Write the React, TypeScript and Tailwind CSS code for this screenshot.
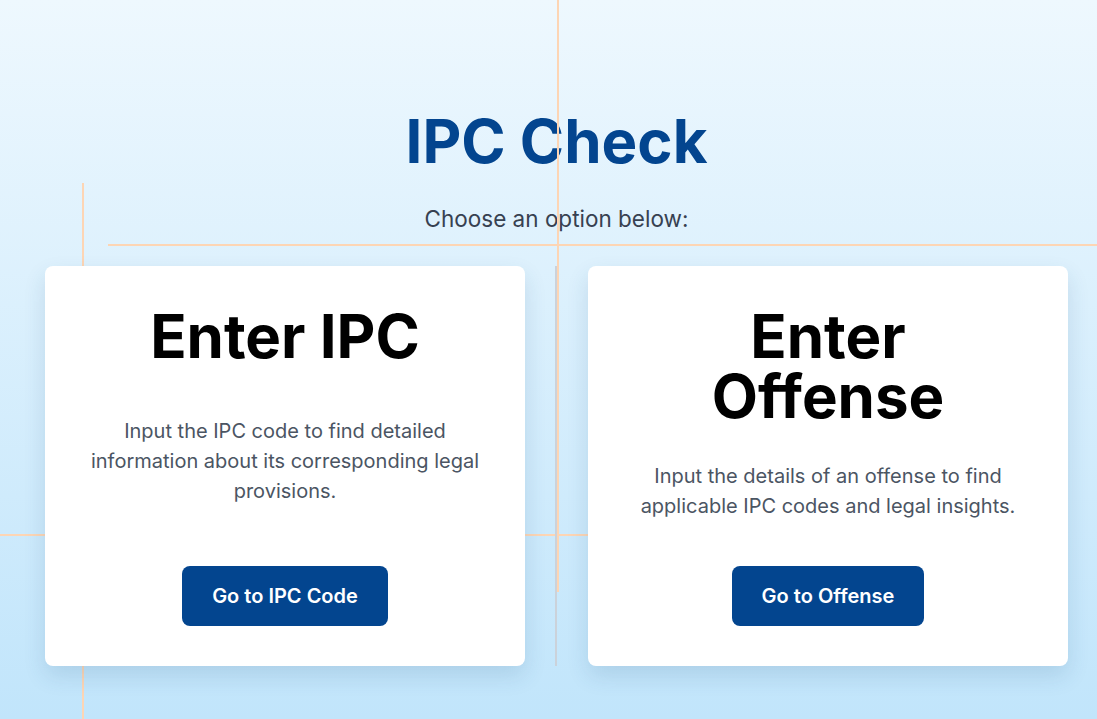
const font = { fontFamily: 'Inter, "Noto Sans", sans-serif' };

type Option = {
  title: string;
  text: string;
  action: string;
};

const options: Option[] = [
  {
    title: 'Enter IPC',
    text: 'Input the IPC code to find detailed information about its corresponding legal provisions.',
    action: 'Go to IPC Code',
  },
  {
    title: 'Enter Offense',
    text: 'Input the details of an offense to find applicable IPC codes and legal insights.',
    action: 'Go to Offense',
  },
];

function OptionCard({ opt }: { opt: Option }) {
  return (
    <div className="relative z-10 w-[480px] h-[400px] bg-white rounded-lg shadow-[0_10px_22px_rgba(30,80,120,0.14)] flex flex-col items-center px-10 py-10 text-center">
      <h2 className="text-[60px] leading-[60px] font-bold text-black px-16">{opt.title}</h2>
      <div className="flex-1 flex items-center pb-[10px]">
        <p className="text-[20px] leading-[30px] text-[#4b5563]">{opt.text}</p>
      </div>
      <button
        type="button"
        className="bg-[#03458f] text-white text-[20px] leading-[28px] font-semibold px-[30px] py-4 rounded-lg"
      >
        {opt.action}
      </button>
    </div>
  );
}

export default function App() {
  return (
    <div
      style={font}
      className="relative min-h-screen overflow-hidden bg-linear-to-b from-[#eef8fe] to-[#c1e5fb]"
    >
      <div className="pt-[111px] pl-[16px] flex flex-col items-center">
        <h1 className="text-[60px] leading-[60px] font-bold text-[#03458f]">IPC Check</h1>
        <p className="mt-[33px] text-[22.5px] leading-[30px] text-[#374151]">Choose an option below:</p>
      </div>

      {/* decorative guide lines */}
      <div className="absolute left-[557px] top-0 w-[2px] h-[592px] bg-[#fdd5b4]" />
      <div className="absolute left-[108px] right-0 top-[244px] h-[2px] bg-[#fdd5b4]" />
      <div className="absolute left-[82px] top-[183px] bottom-0 w-[2px] bg-[#fdd5b4]" />
      <div className="absolute left-0 w-[700px] top-[534px] h-[2px] bg-[#fdd5b4]" />

      <div className="mt-[32px] pl-[45px] flex items-stretch">
        <OptionCard opt={options[0]} />
        <div className="relative z-10 ml-[30px] mr-[31px] w-[2px] bg-[#cbd2da]" />
        <OptionCard opt={options[1]} />
      </div>
    </div>
  );
}
